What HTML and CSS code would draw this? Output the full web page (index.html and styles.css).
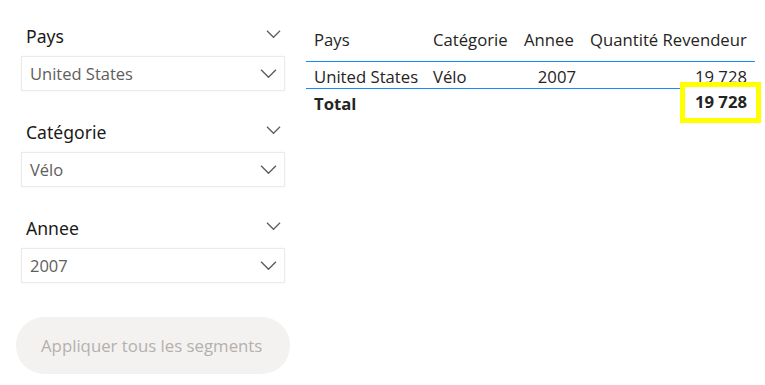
FILE: index.html
```html
<!DOCTYPE html>
<html lang="fr">
<head>
<meta charset="utf-8">
<link rel="stylesheet" href="styles.css">
</head>
<body>
<div class="page">
  <div class="slicers">
    <div class="slicer">
      <div class="slicer-head"><span>Pays</span><svg class="chev" viewBox="0 0 16 10"><path d="M1 1.5 L8 8.5 L15 1.5" /></svg></div>
      <div class="dropdown"><span>United States</span><svg class="chev" viewBox="0 0 16 10"><path d="M1 1.5 L8 8.5 L15 1.5" /></svg></div>
    </div>
    <div class="slicer">
      <div class="slicer-head"><span>Catégorie</span><svg class="chev" viewBox="0 0 16 10"><path d="M1 1.5 L8 8.5 L15 1.5" /></svg></div>
      <div class="dropdown"><span>Vélo</span><svg class="chev" viewBox="0 0 16 10"><path d="M1 1.5 L8 8.5 L15 1.5" /></svg></div>
    </div>
    <div class="slicer">
      <div class="slicer-head"><span>Annee</span><svg class="chev" viewBox="0 0 16 10"><path d="M1 1.5 L8 8.5 L15 1.5" /></svg></div>
      <div class="dropdown"><span>2007</span><svg class="chev" viewBox="0 0 16 10"><path d="M1 1.5 L8 8.5 L15 1.5" /></svg></div>
    </div>
    <button class="apply">Appliquer tous les segments</button>
  </div>
  <div class="table">
    <div class="row head">
      <div class="c c1">Pays</div>
      <div class="c c2">Catégorie</div>
      <div class="c c3">Annee</div>
      <div class="c c4">Quantité Revendeur</div>
    </div>
    <div class="row data">
      <div class="c c1">United States</div>
      <div class="c c2">Vélo</div>
      <div class="c c3 num">2007</div>
      <div class="c c4 num">19 728</div>
    </div>
    <div class="row total">
      <div class="c c1">Total</div>
      <div class="c c2"></div>
      <div class="c c3"></div>
      <div class="c c4 tot"><div class="hl">19 728</div></div>
    </div>
  </div>
</div>
</body>
</html>
```
FILE: styles.css
```css
html, body {
  margin: 0;
  padding: 0;
  background: #ffffff;
}
body {
  font-family: "Open Sans", "Noto Sans", sans-serif;
  color: #252423;
}
.page {
  display: flex;
  width: 765px;
  height: 385px;
  padding: 0 0 0 16px;
  box-sizing: border-box;
}
.slicers {
  width: 274px;
  display: flex;
  flex-direction: column;
  padding-top: 22px;
}
.slicer {
  padding: 0 5px 0 5px;
  margin-bottom: 27px;
}
.slicer-head {
  display: flex;
  justify-content: space-between;
  align-items: center;
  padding: 0 4px 0 5px;
  height: 27px;
  font-family: "Noto Sans", sans-serif;
  font-size: 17.6px;
  color: #1b1a19;
  margin-bottom: 7px;
}
.slicer-head .chev {
  width: 15px;
  height: 10px;
  margin-top: -4px;
}
.chev path {
  fill: none;
  stroke: #605e5c;
  stroke-width: 1.3;
}
.dropdown {
  height: 35px;
  box-sizing: border-box;
  border: 1px solid #ebebeb;
  box-shadow: 0 0 2px rgba(0,0,0,0.06);
  display: flex;
  justify-content: space-between;
  align-items: center;
  padding: 0 7px 0 8px;
  font-size: 16.5px;
  color: #605e5c;
}
.dropdown .chev {
  width: 17px;
  height: 11px;
}
.apply {
  margin-top: 7px;
  width: 274px;
  height: 57px;
  border: none;
  border-radius: 28px;
  background: #f3f2f1;
  color: #b3b0ad;
  font-family: "Open Sans", "Noto Sans", sans-serif;
  font-size: 16.8px;
  text-align: left;
  padding: 0 0 0 25px;
}
.table {
  margin-left: 16px;
  width: 449px;
  padding-top: 26px;
  font-size: 16.7px;
}
.row {
  display: grid;
  grid-template-columns: 119px 91px 68px 171px;
}
.c {
  padding: 0 8px;
  white-space: nowrap;
}
.num {
  text-align: right;
}
.head {
  height: 36px;
  border-bottom: 1px solid #118dff;
  box-sizing: border-box;
  align-items: center;
  padding-bottom: 9px;
}
.head .c4 { padding: 0 4px 0 6px; }
.data {
  height: 27px;
  border-bottom: 1px solid #118dff;
  box-sizing: border-box;
  align-items: center;
  padding-top: 2px;
}
.total {
  height: 28px;
  font-weight: 700;
  align-items: center;
}
.total .tot {
  padding: 0;
  align-self: start;
  height: 28px;
}
.hl {
  width: 81px;
  height: 41px;
  box-sizing: border-box;
  margin: -7px -6px 0 auto;
  border: 5px solid #ffff00;
  background: #ffffff;
  line-height: 29px;
  padding-right: 9px;
  text-align: right;
}
```
